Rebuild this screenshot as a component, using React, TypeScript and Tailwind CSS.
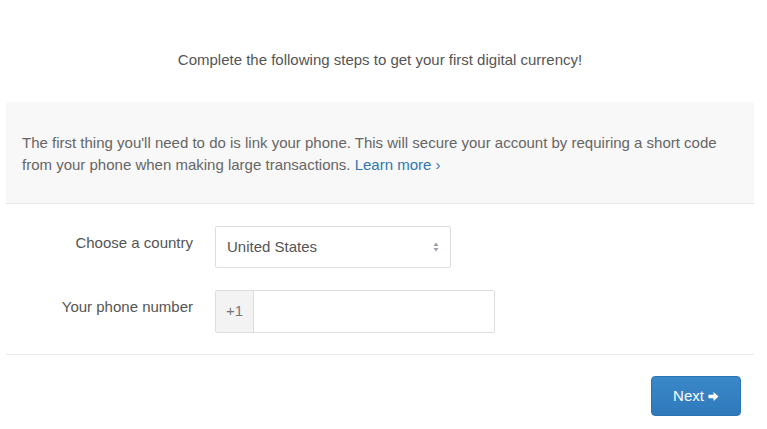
import React, { useState } from 'react';

const SelectArrows: React.FC = () => (
  <svg width="6" height="10" viewBox="0 0 6 10" className="text-gray-400">
    <path d="M3 0.5 L5.5 4 L0.5 4 Z" fill="currentColor" />
    <path d="M3 9.5 L5.5 6 L0.5 6 Z" fill="currentColor" />
  </svg>
);

const ArrowRight: React.FC = () => (
  <svg width="11" height="11" viewBox="0 0 12 12" className="ml-[4px]">
    <path d="M0.5 4.2 H6 V1 L11.5 6 L6 11 V7.8 H0.5 Z" fill="currentColor" />
  </svg>
);

const App: React.FC = () => {
  const [phone, setPhone] = useState('');

  return (
    <div className="min-h-screen bg-white font-['Liberation_Sans',Arial,sans-serif] text-[#555]">
      <div className="ml-[6px] w-[748px]">
        <p className="pt-[50px] text-center text-[15px] leading-[20px] text-[#555]">
          Complete the following steps to get your first digital currency!
        </p>

        <div className="mt-[32px] border-b border-[#e6e6e6] bg-[#f8f8f8] px-[16px] pt-[30px] pb-[27px] text-[15px] leading-[22px] text-[#666]">
          The first thing you'll need to do is link your phone. This will secure your account by requiring a short code
          <br />
          from your phone when making large transactions.{' '}
          <a href="#" className="text-[#2f76b5]">
            Learn more ›
          </a>
        </div>

        <div className="pt-[22px]">
          <div className="flex items-start">
            <label className="w-[209px] pr-[22px] pt-[8px] text-right text-[15px] leading-[18px] text-[#555]">
              Choose a country
            </label>
            <div className="flex h-[42px] w-[236px] items-center justify-between rounded-[2px] border border-[#dedede] bg-white pl-[11px] pr-[11px] text-[15px] text-[#555]">
              <span>United States</span>
              <SelectArrows />
            </div>
          </div>

          <div className="mt-[22px] flex items-start">
            <label className="w-[209px] pr-[22px] pt-[8px] text-right text-[15px] leading-[18px] text-[#555]">
              Your phone number
            </label>
            <div className="flex h-[43px] w-[280px] rounded-[2px] border border-[#dedede] bg-white">
              <span className="flex w-[38px] items-center justify-center border-r border-[#dedede] bg-[#f3f3f3] text-[15px] text-[#777]">
                +1
              </span>
              <input
                value={phone}
                onChange={(e) => setPhone(e.target.value)}
                className="flex-1 bg-white px-[10px] text-[15px] outline-none"
              />
            </div>
          </div>
        </div>

        <div className="mt-[21px] border-t border-[#eaeaea]" />

        <div className="flex justify-end pt-[21px] pr-[13px]">
          <button className="flex h-[40px] w-[90px] items-center justify-center rounded-[4px] border border-[#2b72b0] bg-gradient-to-b from-[#3a88c9] to-[#2f79bb] text-[15px] text-white">
            Next
            <ArrowRight />
          </button>
        </div>
      </div>
    </div>
  );
};

export default App;
